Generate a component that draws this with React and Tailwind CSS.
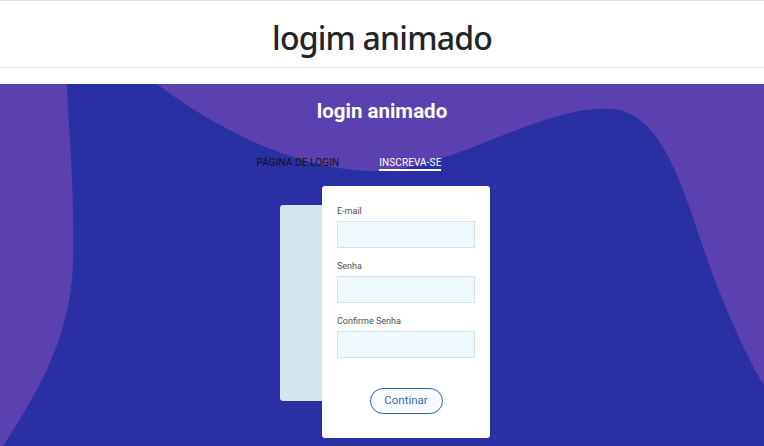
import React from "react";

function Field({ label }) {
  return (
    <div className="flex flex-col">
      <label className="text-[9px] leading-[11px] text-[#4f4f4f] mb-[4px]">{label}</label>
      <div className="h-[27px] w-full bg-[#eef8fd] border border-[#d3e2f1]" />
    </div>
  );
}

export default function App() {
  return (
    <div className="w-[764px] h-[446px] overflow-hidden bg-white" style={{ fontFamily: "Roboto, 'Noto Sans', sans-serif" }}>
      <header className="h-[68px] border-t border-b border-[#dcdfe3] pt-[17px] pb-[9px] flex justify-center">
        <h1
          className="text-[32px] leading-[40px] font-medium text-[#212529] tracking-[-0.8px]"
          style={{ fontFamily: "'Noto Sans', sans-serif" }}
        >
          logim animado
        </h1>
      </header>

      <section className="relative mt-[16px] h-[362px] bg-[#5b41b0] overflow-hidden">
        <svg
          className="absolute inset-0 w-full h-full"
          viewBox="0 0 764 362"
          preserveAspectRatio="none"
        >
          <path
            d="M67,0 L157,0 C210,40 290,85 370,87 C450,89 540,20 612,25 C660,28 682,100 702,160 C722,220 750,280 764,301 L764,362 L3,362 C30,320 70,260 73,181 C75,100 68,40 67,0 Z"
            fill="#2a2fa3"
          />
        </svg>

        <div className="relative flex flex-col items-center pt-[15px]">
          <h2 className="text-[20.5px] leading-[24px] font-bold text-white">login animado</h2>

          <nav className="mt-[34px] mr-[66px] flex gap-[40px] text-[10px] leading-[12px] uppercase tracking-[0.1px]">
            <span className="text-[#111] border-b-2 border-transparent">PÁGINA DE LOGIN</span>
            <span className="text-white border-b-2 border-white">INSCREVA-SE</span>
          </nav>

          <div className="mt-[15px] ml-[6px] flex items-start">
            <div className="w-[42px] h-[196px] mt-[19px] bg-[#d5e5f0] rounded-l-[3px]" />
            <div className="w-[168px] h-[252px] bg-white rounded-[3px] px-[15px] pt-[20px] pb-[24px] flex flex-col">
              <div className="flex flex-col gap-[13px]">
                <Field label="E-mail" />
                <Field label="Senha" />
                <Field label="Confirme Senha" />
              </div>
              <div className="mt-[30px] flex justify-center">
                <button className="w-[73px] h-[26px] rounded-full border-[1.5px] border-[#2767aa] bg-[#f9fcff] text-[11.5px] text-[#326ca9]">
                  Continar
                </button>
              </div>
            </div>
          </div>
        </div>
      </section>
    </div>
  );
}
